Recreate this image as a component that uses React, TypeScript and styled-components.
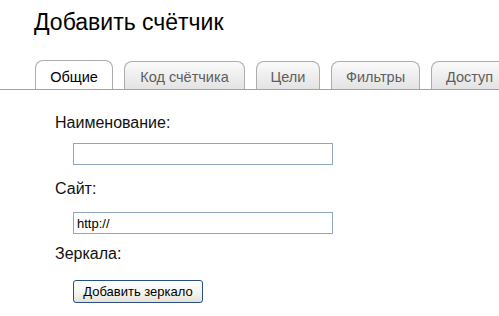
import React from "react";
import styled, { createGlobalStyle } from "styled-components";

const Global = createGlobalStyle`
  html, body { margin: 0; padding: 0; background: #fff; }
  body { font-family: "Liberation Sans", Arial, sans-serif; color: #000; }
`;

const Page = styled.div`
  width: 499px;
  height: 316px;
  overflow: hidden;
  background: #fff;
`;

const Title = styled.h1`
  margin: 0;
  padding: 8px 0 0 34px;
  font-size: 23px;
  font-weight: normal;
  line-height: 28px;
`;

const TabBar = styled.div`
  margin-top: 24px;
  display: flex;
  align-items: flex-end;
  gap: 11px;
  padding-left: 35px;
  border-bottom: 1px solid #a3a3a3;
  height: 29px;
  overflow: hidden;
`;

const Tab = styled.div<{ $active?: boolean; $align?: string }>`
  flex: none;
  box-sizing: border-box;
  height: ${(p) => (p.$active ? "30px" : "28px")};
  margin-bottom: ${(p) => (p.$active ? "-1px" : "0")};
  padding: ${(p) => (p.$active ? "8px" : "7px")} 0 0 ${(p) => (p.$align === "left" ? "14px" : "0")};
  text-align: ${(p) => p.$align ?? "center"};
  font-size: 14.5px;
  line-height: 16px;
  white-space: nowrap;
  color: ${(p) => (p.$active ? "#000" : "#5e5e5e")};
  border: 1px solid #adadad;
  border-bottom: none;
  border-radius: 8px 8px 0 0;
  background: ${(p) =>
    p.$active ? "#fff" : "linear-gradient(#fafafa, #e3e3e3)"};
`;

const Form = styled.div`
  padding: 24px 0 0 55px;
`;

const Label = styled.div<{ $top?: number }>`
  margin-top: ${(p) => p.$top ?? 0}px;
  font-size: 16px;
  line-height: 18px;
  color: #111;
`;

const Control = styled.div<{ $top: number }>`
  margin-top: ${(p) => p.$top}px;
  padding-left: 18px;
  display: flex;
`;

const TextInput = styled.input`
  box-sizing: border-box;
  width: 260px;
  height: 22px;
  margin: 0;
  padding: 0 3px;
  border: 1px solid #8ea6c4;
  font-family: "Liberation Sans", Arial, sans-serif;
  font-size: 13px;
  color: #000;
  outline: none;
`;

const Button = styled.button`
  box-sizing: border-box;
  width: 130px;
  height: 23px;
  margin: 0;
  padding: 0;
  border: 1px solid #2a4f80;
  border-radius: 3px;
  background: linear-gradient(#ffffff, #f4f3ee 60%, #e3e1d6);
  font-family: "Liberation Sans", Arial, sans-serif;
  font-size: 13px;
  color: #000;
`;

const tabs = [
  { label: "Общие", width: 78 },
  { label: "Код счётчика", width: 121 },
  { label: "Цели", width: 64 },
  { label: "Фильтры", width: 89 },
  { label: "Доступ", width: 90, align: "left" },
];

export default function App() {
  return (
    <Page>
      <Global />
      <Title>Добавить счётчик</Title>
      <TabBar>
        {tabs.map((t, i) => (
          <Tab
            key={t.label}
            $active={i === 0}
            $align={t.align}
            style={{ width: t.width }}
          >
            {t.label}
          </Tab>
        ))}
      </TabBar>
      <Form>
        <Label>Наименование:</Label>
        <Control $top={11}>
          <TextInput defaultValue="" />
        </Control>
        <Label $top={15}>Сайт:</Label>
        <Control $top={14}>
          <TextInput defaultValue="http://" />
        </Control>
        <Label $top={11}>Зеркала:</Label>
        <Control $top={17}>
          <Button>Добавить зеркало</Button>
        </Control>
      </Form>
    </Page>
  );
}
